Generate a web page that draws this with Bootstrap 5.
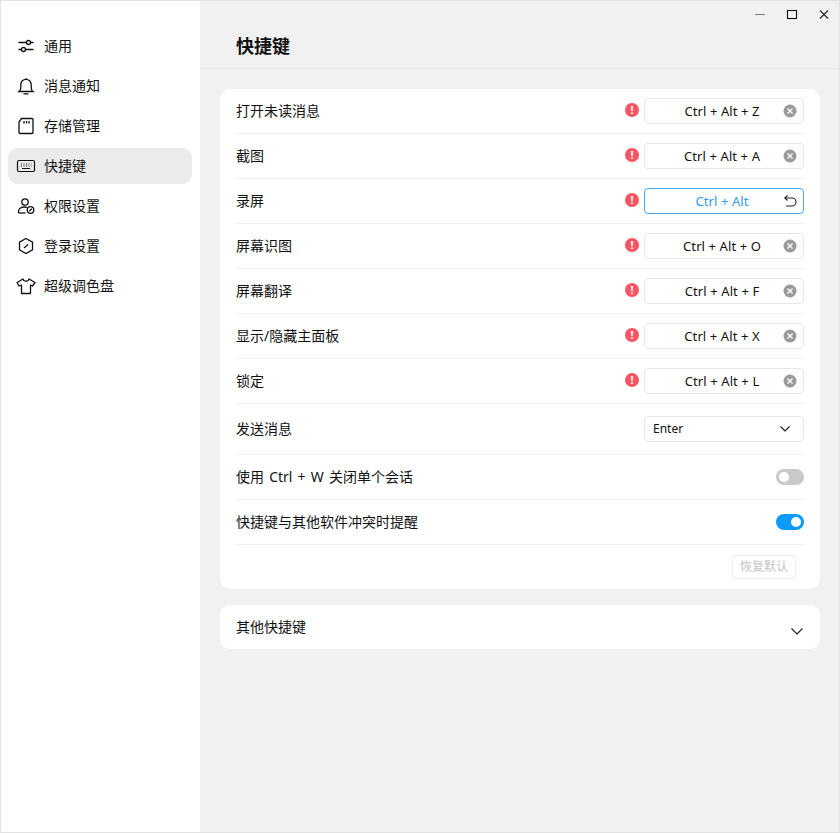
<!DOCTYPE html>
<html lang="zh-CN">
<head>
  <meta charset="UTF-8">
  <meta name="viewport" content="width=device-width, initial-scale=1.0">
  <title>快捷键</title>
  <link rel="stylesheet" href="https://cdn.jsdelivr.net/npm/bootstrap@5.3.0/dist/css/bootstrap.min.css">
  <style>
    html, body { height: 100%; }
    body { font-family: "Noto Sans", "Noto Sans CJK SC", sans-serif; font-size: 14px; color: #111; background: #f1f1f1; overflow: hidden; }
    .app-shell { width: 840px; height: 833px; border: 1px solid #e2e2e2; }
    .side-pane { width: 199px; background: #fff; padding: 27px 8px 0 7px; }
    .side-item { height: 36px; margin-bottom: 4px; border-radius: 10px; padding-left: 8px; gap: 8px; font-size: 14px; }
    .side-item > span, .key-row > span, .other-box > span { padding-bottom: 2px; }
    .side-item.is-on { background: #ebebeb; }
    .side-item svg { width: 20px; height: 20px; flex: none; }
    .main-pane { background: #f1f1f1; }
    .title-bar { height: 68px; border-bottom: 1px solid #e6e6e6; padding-left: 36px; position: relative; }
    .title-text { font-size: 18px; font-weight: 700; margin: 0; padding-top: 30px; line-height: 30px; }
    .win-btns { position: absolute; top: 6px; right: 8px; gap: 18px; }
    .win-btns svg { width: 14px; height: 14px; display: block; }
    .content-pad { padding: 20px 19px 0 20px; }
    .panel-box { background: #fff; border-radius: 10px; padding: 0 16px; }
    .key-row { height: 45px; border-bottom: 1px solid #f0f0f0; }
    .key-row.row-tall { height: 51px; }
    .warn-dot { width: 14px; height: 14px; border-radius: 50%; background: #fb5463; color: #fff; font-size: 11px; font-weight: 700; line-height: 14px; text-align: center; margin-right: 5px; margin-top: -2px; }
    .key-box { width: 160px; height: 26px; border: 1px solid #e8e8e8; border-radius: 4px; position: relative; font-size: 13px; letter-spacing: .1px; text-align: center; line-height: 24px; padding-right: 4px; }
    .key-box.is-edit { border-color: #4aa8f5; color: #2f9bf5; }
    .key-box svg { position: absolute; right: 6px; top: 5px; width: 14px; height: 14px; }
    .key-select { width: 160px; height: 26px; border: 1px solid #e8e8e8; border-radius: 4px; padding: 0 8px; font-size: 12px; }
    .toggle-off, .toggle-on { width: 28px; height: 16px; border-radius: 8px; position: relative; }
    .toggle-off { background: #c9c9c9; }
    .toggle-on { background: #0a9bfc; }
    .toggle-off::after, .toggle-on::after { content: ""; position: absolute; top: 3px; width: 10px; height: 10px; border-radius: 50%; background: #fff; }
    .toggle-off::after { left: 3px; }
    .toggle-on::after { right: 3px; }
    .foot-row { height: 44px; padding-right: 8px; }
    .reset-btn { width: 64px; height: 24px; padding: 0; border: 1px solid #eee; border-radius: 4px; background: #fff; color: #c4c4c4; font-size: 12px; }
    .other-box { height: 44px; margin-top: 16px; }
    .other-box svg { margin-top: 8px; }
    .wide-latin { word-spacing: 1.500px; }
  </style>
</head>
<body>
  <div class="app-shell d-flex">
    <nav class="side-pane flex-shrink-0">
      <div class="side-item d-flex align-items-center">
        <svg viewBox="0 0 20 20" fill="none" stroke="#111" stroke-width="1.300"><path d="M2.500 6.500h8M14.500 6.500h3M2.500 13.500h3M9.500 13.500h8"/><circle cx="12.500" cy="6.500" r="2"/><circle cx="7.500" cy="13.500" r="2"/></svg>
        <span>通用</span>
      </div>
      <div class="side-item d-flex align-items-center">
        <svg viewBox="0 0 20 20" fill="none" stroke="#111" stroke-width="1.300"><path d="M3 15.500h14c-1.300-1-1.800-2.300-1.800-4V8.500a5.200 5.200 0 0 0-10.400 0v3c0 1.700-.5 3-1.800 4Z"/><path d="M8 17.800h4" stroke-linecap="round"/><path d="M10 3.300V2.200"/></svg>
        <span>消息通知</span>
      </div>
      <div class="side-item d-flex align-items-center">
        <svg viewBox="0 0 20 20" fill="none" stroke="#111" stroke-width="1.300"><path d="M5.500 2.500H16a1 1 0 0 1 1 1v13a1 1 0 0 1-1 1H4a1 1 0 0 1-1-1V6Z"/><path d="M8 5v2.500M10.500 5v2.500M13 5v2.500"/></svg>
        <span>存储管理</span>
      </div>
      <div class="side-item is-on d-flex align-items-center">
        <svg viewBox="0 0 20 20" fill="none" stroke="#111" stroke-width="1.200"><rect x="1.500" y="4.500" width="17" height="11" rx="1.500"/><path d="M5 8h1M7.500 8h1M10 8h1M12.500 8h1M15 8h.5M5 10h1M7.500 10h1M10 10h1M12.500 10h1M15 10h.5M6 12.500h8"/></svg>
        <span>快捷键</span>
      </div>
      <div class="side-item d-flex align-items-center">
        <svg viewBox="0 0 20 20" fill="none" stroke="#111" stroke-width="1.300"><circle cx="9" cy="6" r="3.200"/><path d="M2.500 17v-1.500c0-2.500 2.500-4.500 6-4.500 1 0 1.700.1 2.500.4"/><path d="M2.500 17h7"/><circle cx="14.500" cy="14" r="3.300"/><path d="m13.200 15.200 2.600-2.400"/></svg>
        <span>权限设置</span>
      </div>
      <div class="side-item d-flex align-items-center">
        <svg viewBox="0 0 20 20" fill="none" stroke="#111" stroke-width="1.300"><path d="m10 2.500 6.500 3.750v7.500L10 17.500l-6.500-3.750v-7.500Z"/><path d="m8 12 4-3.500"/></svg>
        <span>登录设置</span>
      </div>
      <div class="side-item d-flex align-items-center">
        <svg viewBox="0 0 20 20" fill="none" stroke="#111" stroke-width="1.300" stroke-linejoin="round"><path d="M7 3 1 6.500l2 3.500L5.500 9v8.500h9V9l2 1 2.500-3.500L13 3c-.5 2.800-5.500 2.800-6 0Z"/></svg>
        <span>超级调色盘</span>
      </div>
    </nav>
    <main class="main-pane flex-grow-1">
      <header class="title-bar">
        <h1 class="title-text">快捷键</h1>
        <div class="win-btns d-flex">
          <svg viewBox="0 0 14 14" stroke="#8a8a8a" stroke-width="1.200"><path d="M2 7.500h10"/></svg>
          <svg viewBox="0 0 14 14" fill="none" stroke="#111" stroke-width="1.100"><rect x="2.500" y="3.500" width="9" height="8"/></svg>
          <svg viewBox="0 0 14 14" stroke="#222" stroke-width="1.100"><path d="m3 3.500 8 8M11 3.500l-8 8"/></svg>
        </div>
      </header>
      <div class="content-pad">
        <section class="panel-box">
          <div class="key-row d-flex align-items-center justify-content-between">
            <span>打开未读消息</span>
            <div class="d-flex align-items-center"><span class="warn-dot">!</span><div class="key-box">Ctrl + Alt + Z<svg viewBox="0 0 14 14"><circle cx="7" cy="7" r="6.500" fill="#9a9a9a"/><path d="m4.500 4.500 5 5M9.500 4.500l-5 5" stroke="#fff" stroke-width="1.300"/></svg></div></div>
          </div>
          <div class="key-row d-flex align-items-center justify-content-between">
            <span>截图</span>
            <div class="d-flex align-items-center"><span class="warn-dot">!</span><div class="key-box">Ctrl + Alt + A<svg viewBox="0 0 14 14"><circle cx="7" cy="7" r="6.500" fill="#9a9a9a"/><path d="m4.500 4.500 5 5M9.500 4.500l-5 5" stroke="#fff" stroke-width="1.300"/></svg></div></div>
          </div>
          <div class="key-row d-flex align-items-center justify-content-between">
            <span>录屏</span>
            <div class="d-flex align-items-center"><span class="warn-dot">!</span><div class="key-box is-edit">Ctrl + Alt<svg viewBox="0 0 14 14" fill="none" stroke="#222" stroke-width="1.100"><path d="M4.500 1.500 1.800 4l2.700 2.500"/><path d="M2 4h7a3.500 3.500 0 0 1 0 8H3"/></svg></div></div>
          </div>
          <div class="key-row d-flex align-items-center justify-content-between">
            <span>屏幕识图</span>
            <div class="d-flex align-items-center"><span class="warn-dot">!</span><div class="key-box">Ctrl + Alt + O<svg viewBox="0 0 14 14"><circle cx="7" cy="7" r="6.500" fill="#9a9a9a"/><path d="m4.500 4.500 5 5M9.500 4.500l-5 5" stroke="#fff" stroke-width="1.300"/></svg></div></div>
          </div>
          <div class="key-row d-flex align-items-center justify-content-between">
            <span>屏幕翻译</span>
            <div class="d-flex align-items-center"><span class="warn-dot">!</span><div class="key-box">Ctrl + Alt + F<svg viewBox="0 0 14 14"><circle cx="7" cy="7" r="6.500" fill="#9a9a9a"/><path d="m4.500 4.500 5 5M9.500 4.500l-5 5" stroke="#fff" stroke-width="1.300"/></svg></div></div>
          </div>
          <div class="key-row d-flex align-items-center justify-content-between">
            <span>显示/隐藏主面板</span>
            <div class="d-flex align-items-center"><span class="warn-dot">!</span><div class="key-box">Ctrl + Alt + X<svg viewBox="0 0 14 14"><circle cx="7" cy="7" r="6.500" fill="#9a9a9a"/><path d="m4.500 4.500 5 5M9.500 4.500l-5 5" stroke="#fff" stroke-width="1.300"/></svg></div></div>
          </div>
          <div class="key-row d-flex align-items-center justify-content-between">
            <span>锁定</span>
            <div class="d-flex align-items-center"><span class="warn-dot">!</span><div class="key-box">Ctrl + Alt + L<svg viewBox="0 0 14 14"><circle cx="7" cy="7" r="6.500" fill="#9a9a9a"/><path d="m4.500 4.500 5 5M9.500 4.500l-5 5" stroke="#fff" stroke-width="1.300"/></svg></div></div>
          </div>
          <div class="key-row row-tall d-flex align-items-center justify-content-between">
            <span>发送消息</span>
            <div class="key-select d-flex align-items-center justify-content-between"><span>Enter</span><svg width="12" height="8" viewBox="0 0 12 8" fill="none" stroke="#222" stroke-width="1.200" class="me-1"><path d="m1.500 1.500 4.500 4.500 4.500-4.500"/></svg></div>
          </div>
          <div class="key-row d-flex align-items-center justify-content-between">
            <span class="wide-latin">使用 Ctrl + W 关闭单个会话</span>
            <div class="toggle-off"></div>
          </div>
          <div class="key-row d-flex align-items-center justify-content-between">
            <span>快捷键与其他软件冲突时提醒</span>
            <div class="toggle-on"></div>
          </div>
          <div class="foot-row d-flex align-items-center justify-content-end">
            <button type="button" class="reset-btn">恢复默认</button>
          </div>
        </section>
        <section class="panel-box other-box d-flex align-items-center justify-content-between">
          <span>其他快捷键</span>
          <svg width="14" height="9" viewBox="0 0 14 9" fill="none" stroke="#222" stroke-width="1.200"><path d="m1.500 1.500 5.500 5.500 5.500-5.500"/></svg>
        </section>
      </div>
    </main>
  </div>
  <script src="https://cdn.jsdelivr.net/npm/bootstrap@5.3.0/dist/js/bootstrap.bundle.min.js"></script>
</body>
</html>
